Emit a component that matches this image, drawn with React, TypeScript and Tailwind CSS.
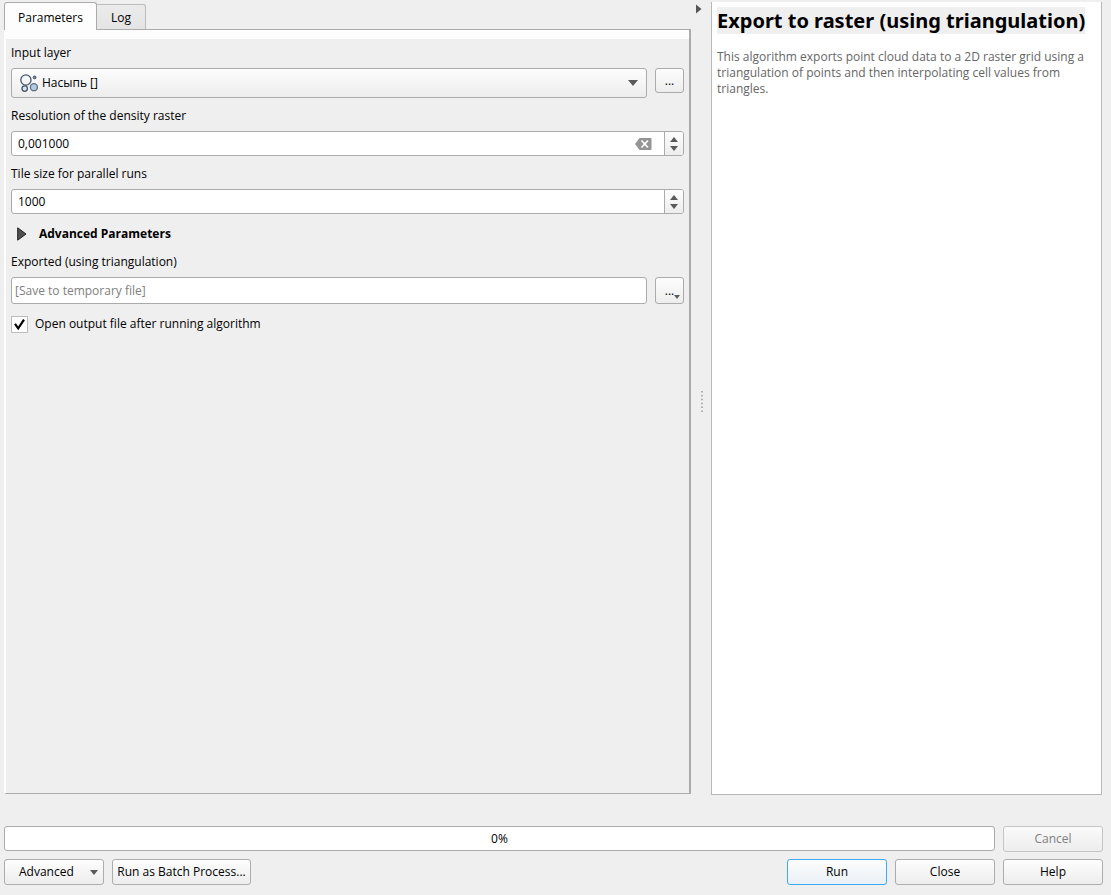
import React, { useState } from "react";

const buttonBase =
  "h-[26px] rounded-[3px] border bg-linear-to-b text-center leading-4 whitespace-nowrap";
const buttonNormal = "border-[#adadad] from-[#fdfdfd] to-[#ededed]";

function PointCloudIcon() {
  return (
    <svg width="18" height="18" viewBox="0 0 18 18" aria-hidden="true">
      <circle cx="5.9" cy="6" r="5.1" fill="#f4f6f8" stroke="#46566a" strokeWidth="1.3" />
      <circle cx="14.6" cy="3.4" r="1.4" fill="#6f8196" stroke="#46566a" strokeWidth="1" />
      <circle cx="13.9" cy="13.2" r="3.5" fill="#b4cbe2" stroke="#5c6c80" strokeWidth="1.3" />
      <circle cx="4.7" cy="14.6" r="2.7" fill="#dbe6f1" stroke="#46566a" strokeWidth="1.3" />
    </svg>
  );
}

function ClearIcon() {
  return (
    <svg width="17" height="12" viewBox="0 0 17 12" aria-hidden="true">
      <path d="M0 6 4.5 0H15.5Q16.5 0 16.5 1V11Q16.5 12 15.5 12H4.5Z" fill="#949494" />
      <path d="M6.5 2.5 13 9.5M13 2.5 6.5 9.5" stroke="#fff" strokeWidth="1.7" />
    </svg>
  );
}

function Arrow({ up = false, size = "md" }: { up?: boolean; size?: "lg" | "md" | "sm" }) {
  const w = size === "lg" ? 10 : size === "md" ? 8 : 6;
  const h = size === "lg" ? 6 : size === "md" ? 5 : 4;
  return (
    <svg width={w} height={h} viewBox="0 0 10 6" preserveAspectRatio="none" aria-hidden="true">
      <path d={up ? "M0 6 5 0 10 6Z" : "M0 0H10L5 6Z"} fill="#5a5a5a" />
    </svg>
  );
}

type SpinProps = { id: string; label: string; initial: string; step: number; decimals: number; clearable?: boolean };

function SpinField({ id, label, initial, step, decimals, clearable }: SpinProps) {
  const [value, setValue] = useState(initial);
  const change = (delta: number) => {
    const next = Math.max(0, (parseFloat(value.replace(",", ".")) || 0) + delta);
    setValue(next.toFixed(decimals).replace(".", ","));
  };
  return (
    <div className="flex flex-col gap-[5px]">
      <label htmlFor={id} className="leading-5">{label}</label>
      <div className="flex h-[25px] overflow-hidden rounded-[3px] border border-[#ababab] bg-white">
        <input
          id={id}
          value={value}
          onChange={(e) => setValue(e.target.value)}
          className="min-w-0 flex-1 bg-transparent px-1.5 outline-none"
        />
        {clearable && (
          <button type="button" aria-label="Clear value" className="mr-3 flex items-center" onClick={() => setValue(initial)}>
            <ClearIcon />
          </button>
        )}
        <div className="flex w-[19px] flex-col border-l border-[#ababab] bg-linear-to-b from-[#fdfdfd] to-[#ededed]">
          <button type="button" aria-label="Increase" className="flex flex-1 items-end justify-center pb-0.5" onClick={() => change(step)}>
            <Arrow up />
          </button>
          <button type="button" aria-label="Decrease" className="flex flex-1 items-start justify-center pt-0.5" onClick={() => change(-step)}>
            <Arrow />
          </button>
        </div>
      </div>
    </div>
  );
}

function ParametersForm() {
  const [open, setOpen] = useState(true);
  return (
    <form className="flex flex-col gap-2 pt-1 pr-[5px] pl-[5px]" onSubmit={(e) => e.preventDefault()}>
      <div className="flex flex-col gap-[5px]">
        <label htmlFor="layer" className="leading-5">Input layer</label>
        <div className="flex items-start gap-2">
          <div className="relative flex-1">
            <select
              id="layer"
              className="block h-[30px] w-full appearance-none rounded-[3px] border border-[#ababab] bg-linear-to-b from-[#fdfdfd] to-[#ededed] pr-6 pl-[30px]"
            >
              <option>Насыпь []</option>
            </select>
            <span className="pointer-events-none absolute inset-y-0 left-[9px] flex items-center">
              <PointCloudIcon />
            </span>
            <span className="pointer-events-none absolute inset-y-0 right-[9px] flex items-center">
              <Arrow size="lg" />
            </span>
          </div>
          <button type="button" aria-label="Browse input layer" className="h-[25px] w-[29px] rounded-[3px] border border-[#ababab] bg-linear-to-b from-[#fdfdfd] to-[#ededed] leading-5">
            ...
          </button>
        </div>
      </div>

      <SpinField id="resolution" label="Resolution of the density raster" initial="0,001000" step={0.001} decimals={6} clearable />
      <SpinField id="tile" label="Tile size for parallel runs" initial="1000" step={1} decimals={0} />

      <button type="button" className="flex items-center gap-3 self-start pt-[2px] pl-1.5 font-bold leading-5">
        <svg width="10" height="14" viewBox="0 0 10 14" aria-hidden="true">
          <path d="M0.7 0.8 9 7 0.7 13.2Z" fill="#505050" stroke="#222" />
        </svg>
        Advanced Parameters
      </button>

      <div className="flex flex-col gap-[5px]">
        <label htmlFor="output" className="leading-5">Exported (using triangulation)</label>
        <div className="flex gap-2">
          <input
            id="output"
            placeholder="[Save to temporary file]"
            className="h-[27px] min-w-0 flex-1 rounded-[3px] border border-[#ababab] bg-white px-[3px] outline-none placeholder:text-[#808080]"
          />
          <button type="button" aria-label="Output options" className="relative h-[27px] w-[29px] rounded-[3px] border border-[#ababab] bg-linear-to-b from-[#fdfdfd] to-[#ededed]">
            ...
            <span className="absolute right-[3px] bottom-1 flex">
              <Arrow size="sm" />
            </span>
          </button>
        </div>
      </div>

      <label className="flex items-center gap-[7px] pt-0.5 leading-5">
        <span className="relative flex">
          <input
            type="checkbox"
            checked={open}
            onChange={(e) => setOpen(e.target.checked)}
            className="peer size-[17px] appearance-none border border-[#bcbcbc] bg-white"
          />
          <svg className="pointer-events-none absolute inset-0 hidden peer-checked:block" width="17" height="17" viewBox="0 0 17 17" aria-hidden="true">
            <path d="M4 7.8 7.2 12.4 13 3.6" fill="none" stroke="#000" strokeWidth="2.2" />
          </svg>
        </span>
        Open output file after running algorithm
      </label>
    </form>
  );
}

export default function App() {
  const [tab, setTab] = useState("parameters");
  return (
    <div className="flex min-h-screen flex-col bg-[#efefef] pt-0.5 pr-2 pb-2.5 pl-1 font-['Open_Sans','Noto_Sans',sans-serif] text-[12px] text-black">
      <div className="grid flex-1 grid-cols-[minmax(0,687fr)_20px_minmax(0,391fr)] pr-px">
        <section className="flex min-w-0 flex-col">
          <div role="tablist" className="flex items-end">
            <button
              type="button"
              role="tab"
              aria-selected={tab === "parameters"}
              onClick={() => setTab("parameters")}
              className="relative -mb-px h-7 w-[93px] rounded-t-[3px] border border-b-0 border-[#ababab] bg-[#fdfdfd] pt-0.5"
            >
              Parameters
            </button>
            <button
              type="button"
              role="tab"
              aria-selected={tab === "log"}
              onClick={() => setTab("log")}
              className="h-[25px] w-[49px] rounded-tr-[3px] border border-b-0 border-l-0 border-[#bcbcbc] bg-linear-to-b from-[#ebebeb] to-[#e4e4e4] pt-0.5"
            >
              Log
            </button>
          </div>
          <div role="tabpanel" className="flex-1 border-t border-r-2 border-b border-l-2 border-[#ababab] border-l-[#fdfdfd]">
            <div className="h-[9px] bg-[#fdfdfd]" />
            {tab === "parameters" && <ParametersForm />}
          </div>
        </section>

        <div className="flex flex-col justify-between pt-0.5 pb-1 pl-1">
          <button type="button" aria-label="Collapse help panel" className="self-start">
            <svg width="7" height="10" viewBox="0 0 7 10" aria-hidden="true">
              <path d="M1 0.5 6.5 5 1 9.5Z" fill="#555" />
            </svg>
          </button>
          <svg className="ml-1.5" width="2" height="22" viewBox="0 0 2 22" aria-hidden="true">
            <path d="M1 0V22" stroke="#b0b0b0" strokeWidth="2" strokeDasharray="1.5 2.4" />
          </svg>
          <span />
        </div>

        <aside className="-mb-px min-w-0 border border-t-0 border-[#b8b8b8] bg-white px-[5px] pt-1.5">
          <h1 className="font-['Noto_Sans',sans-serif] text-[20px] leading-[25px] font-bold whitespace-nowrap">
            <span className="bg-[#efefef]">Export to raster (using triangulation)</span>
          </h1>
          <p className="mt-4 leading-4 text-[#666]">
            This algorithm exports point cloud data to a 2D raster grid using a triangulation of points and then interpolating cell values from triangles.
          </p>
        </aside>
      </div>

      <footer className="mt-8 flex flex-col gap-[7px]">
        <div className="flex gap-2">
          <div
            role="progressbar"
            aria-label="Progress"
            aria-valuenow={0}
            className="flex h-[25px] flex-1 items-center justify-center rounded-[3px] border border-[#ababab] bg-white"
          >
            0%
          </div>
          <button type="button" disabled className={`${buttonBase} w-[100px] border-[#c6c6c6] from-[#fafafa] to-[#ededed] text-[#808080]`}>
            Cancel
          </button>
        </div>
        <div className="flex gap-2">
          <button type="button" className={`${buttonBase} ${buttonNormal} flex w-[100px] items-center justify-between pr-[5px] pl-3.5`}>
            Advanced
            <Arrow />
          </button>
          <button type="button" className={`${buttonBase} ${buttonNormal} w-[139px]`}>Run as Batch Process...</button>
          <span className="flex-1" />
          <button type="submit" className={`${buttonBase} w-[100px] border-[#3daaf5] from-[#fdfdfd] to-[#e9f0f6]`}>Run</button>
          <button type="button" className={`${buttonBase} ${buttonNormal} w-[100px]`}>Close</button>
          <button type="button" className={`${buttonBase} ${buttonNormal} w-[100px]`}>Help</button>
        </div>
      </footer>
    </div>
  );
}
